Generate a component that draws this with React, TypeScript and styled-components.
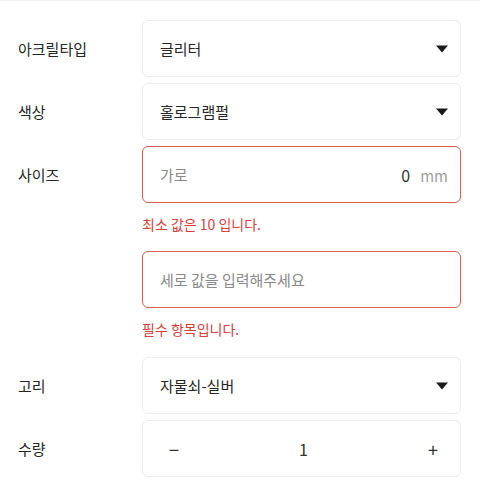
import { FC } from 'react';
import styled, { createGlobalStyle } from 'styled-components';

const GlobalStyle = createGlobalStyle`
  html, body {
    margin: 0;
    padding: 0;
    background: #fff;
    font-family: 'Noto Sans CJK KR', 'Noto Sans', sans-serif;
    color: #222;
  }
`;

const Caret: FC = () => (
  <svg width='12' height='8' viewBox='0 0 12 8'>
    <path d='M0 0.5 L12 0.5 L6 7.5 Z' fill='#1a1a1a' />
  </svg>
);

const SelectBox: FC<{ value: string }> = ({ value }) => (
  <Field>
    <Value>{value}</Value>
    <Caret />
  </Field>
);

export default function App() {
  return (
    <>
      <GlobalStyle />
      <Page>
        <Row>
          <Label>아크릴타입</Label>
          <Control>
            <SelectBox value='글리터' />
          </Control>
        </Row>
        <Row>
          <Label>색상</Label>
          <Control>
            <SelectBox value='홀로그램펄' />
          </Control>
        </Row>
        <Row>
          <Label>사이즈</Label>
          <Control>
            <Field $error>
              <Placeholder>가로</Placeholder>
              <InputTail>
                <Number>0</Number>
                <Unit>mm</Unit>
              </InputTail>
            </Field>
            <ErrorText>최소 값은 10 입니다.</ErrorText>
            <Field $error>
              <Placeholder>세로 값을 입력해주세요</Placeholder>
            </Field>
            <ErrorText $last>필수 항목입니다.</ErrorText>
          </Control>
        </Row>
        <Row>
          <Label>고리</Label>
          <Control>
            <SelectBox value='자물쇠-실버' />
          </Control>
        </Row>
        <Row>
          <Label>수량</Label>
          <Control>
            <Field>
              <StepButton>−</StepButton>
              <Qty>1</Qty>
              <StepButton>+</StepButton>
            </Field>
          </Control>
        </Row>
      </Page>
    </>
  );
}

const Page = styled.div`
  display: flex;
  flex-direction: column;
  gap: 6px;
  border-top: 1px solid #f0f0f0;
  padding: 19px 19px 8px 18px;
`;

const Row = styled.div`
  display: grid;
  grid-template-columns: 124px 1fr;
  align-items: start;
`;

const Label = styled.div`
  height: 57px;
  display: flex;
  align-items: center;
  font-size: 15px;
  color: #262626;
`;

const Control = styled.div`
  display: flex;
  flex-direction: column;
`;

const Field = styled.div<{ $error?: boolean }>`
  box-sizing: border-box;
  height: 57px;
  display: flex;
  align-items: center;
  justify-content: space-between;
  padding: 0 12px 0 17px;
  border: 1px solid ${({ $error }) => ($error ? '#dc5b52' : '#ececec')};
  border-radius: 6px;
  background: #fff;
`;

const Value = styled.span`
  font-size: 15px;
  color: #262626;
`;

const Placeholder = styled.span`
  font-size: 15px;
  color: #8a8a8a;
`;

const InputTail = styled.span`
  display: flex;
  align-items: baseline;
  gap: 10px;
`;

const Number = styled.span`
  font-size: 16px;
  color: #333;
`;

const Unit = styled.span`
  font-size: 15px;
  color: #a0a0a0;
`;

const ErrorText = styled.div<{ $last?: boolean }>`
  font-size: 14px;
  line-height: 20px;
  color: #d8413a;
  margin: 11px 0 ${({ $last }) => ($last ? '12px' : '17px')};
`;

const StepButton = styled.span`
  width: 20px;
  text-align: center;
  font-size: 18px;
  color: #333;
  margin-left: 4px;
  &:last-child {
    margin-left: 0;
    margin-right: 5px;
  }
`;

const Qty = styled.span`
  font-size: 16px;
  color: #333;
`;
